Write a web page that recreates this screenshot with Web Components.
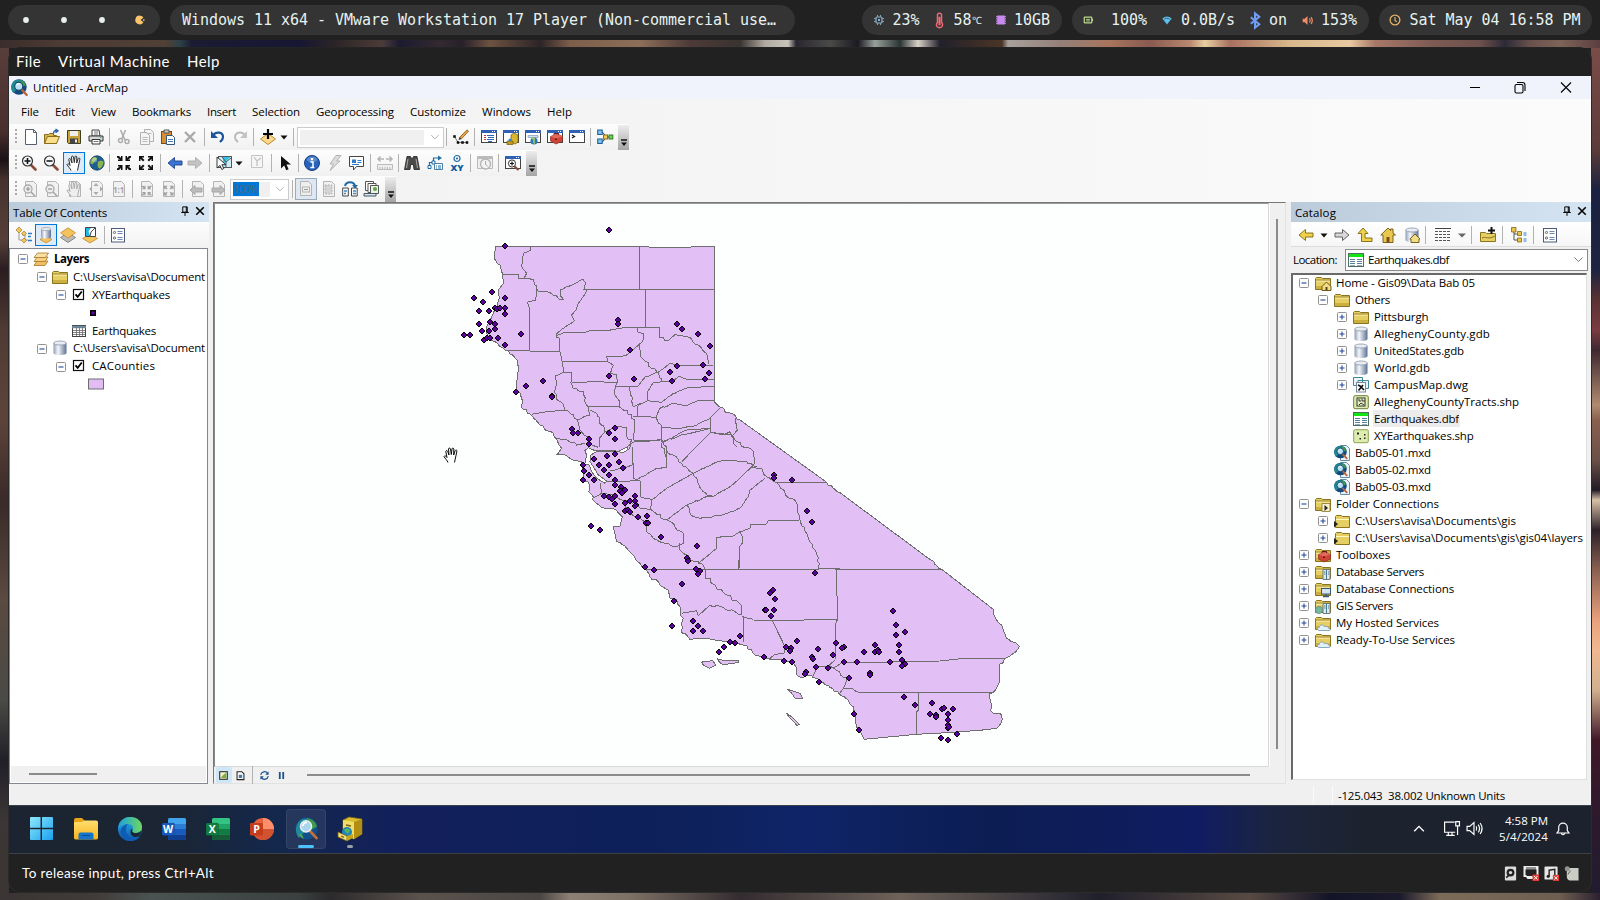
<!DOCTYPE html>
<html lang="en"><head><meta charset="utf-8"><title>Untitled - ArcMap</title>
<style>
html,body{margin:0;padding:0;width:1600px;height:900px;overflow:hidden;background:#212121;font-family:"Open Sans","Noto Sans",sans-serif;font-size:12px;color:#000}
</style></head><body>
<desk-top></desk-top>
<script>
/* ---------- icon library: 16x16 artwork unless a viewBox is given ---------- */
const page=(c='#555')=>`<path d="M2.5.5h8l3 3v12h-11z" fill="#fff" stroke="${c}"/><path d="M10.5.5v3h3" fill="none" stroke="${c}"/>`;
const win=(inner)=>`<rect x=".5" y="1.5" width="15" height="12" fill="#fff" stroke="#444"/><rect x="0" y="1" width="16" height="3" fill="#2f62b5"/><path d="M11 2.5h1M13 2.5h1" stroke="#fff"/>${inner}`;
const folder=(extra='')=>`<path d="M.5 14.5v-11l1-1h5l1 1h8v11z" fill="#e6cf62" stroke="#8a7420"/><path d="M1 6h14" stroke="#fff6c0"/><path d="M1 5h14" stroke="#8a7420" stroke-width=".8"/><path d="M1 11h14v3H1z" fill="#cbb040"/>${extra}`;
const cyl=`<path d="M1.500 3v10c0 1.300 3 2 6.500 2s6.500-.7 6.500-2V3z" fill="url(#cy)"/><ellipse cx="8" cy="3" rx="6.300" ry="2" fill="#e9edf3" stroke="#8b97a8" stroke-width=".8"/>`;
const globe=`<circle cx="8" cy="8" r="7.2" fill="#1d5f93" stroke="#123a5e" stroke-width=".8"/><path d="M4 2.5c2-1 4-.5 4 1S5 6 4.500 8 3 9 1.500 8.500C1 6 2 4 4 2.500zM9 7c2-2 5-1 5.500 0S13 13 11 13.500 8 10 9 7z" fill="#8ab34d"/><circle cx="5.500" cy="5" r="2.500" fill="#fff" opacity=".35"/>`;
const arrows=(c)=>`<g fill="${c}"><path d="M1 1h2l2 2V1h1.500v5H2V4.500h2L1 2.500z"/><path transform="matrix(-1 0 0 1 16 0)" d="M1 1h2l2 2V1h1.500v5H2V4.500h2L1 2.500z"/><path transform="matrix(1 0 0 -1 0 16)" d="M1 1h2l2 2V1h1.500v5H2V4.500h2L1 2.500z"/><path transform="rotate(180 8 8)" d="M1 1h2l2 2V1h1.500v5H2V4.500h2L1 2.500z"/></g>`;
const arrowsOut=(c)=>['','translate(16 0) scale(-1 1)','translate(0 16) scale(1 -1)','rotate(180 8 8)'].map(t=>`<path transform="${t}" fill="${c}" d="M1 1h5v1.500H3.800L6.500 5 5 6.500 2.500 3.800V6H1z"/>`).join('');
const mag=(s,c='#333')=>`<path d="M10 10l4.500 4.500" stroke="#8c4a38" stroke-width="2.600" stroke-linecap="round"/><circle cx="6.500" cy="6" r="5" fill="#f4f8fb" stroke="${c}" stroke-width="1.200"/><path d="${s}" stroke="#111" stroke-width="1.600"/>`;
const arcmap=`<circle cx="7.500" cy="7.500" r="7.300" fill="#134a80"/><path d="M2 3c2-3 7-3 10 0L8 8l-6 5C-.5 10 0 6 2 3z" fill="#1f8a90"/><path d="M9 1q4 1 5 5l-3 1z" fill="#3f9a4a"/><path d="M10.500 10.500l4.300 4.500" stroke="#b5643b" stroke-width="2.200" stroke-linecap="round"/><circle cx="7.300" cy="6.800" r="3.800" fill="#b8e0f4" stroke="#173f66"/><path d="M5.300 6a2.500 2.500 0 0 1 3-1.500" stroke="#fff" fill="none"/>`;
const pgGrey='<path d="M3.500.5h8l3 3v12h-11z" fill="#f1f1f1" stroke="#b4b4b4"/>';
const hand=(c,f='#fff')=>`<path d="M5 15.500c-.5-2-3-4-4-6 .6-1.200 2-.6 3 1L2.800 4.500c0-1.300 1.500-1.300 1.900 0L6 8 5.500 2c.2-1.300 1.700-1.200 2 0L8.300 7.500 9 1.800c.3-1.100 1.700-1 1.800.2L10.700 8l1.500-4.500c.5-1 1.800-.6 1.700.6-.2 3-1.400 5-1.700 8l-.7 3.400" fill="${f}" stroke="${c}" stroke-width=".95"/>`;
const srv='<path d="M8 5.500h7v10H8z" fill="#dfe8ee" stroke="#60737f" stroke-width=".9"/><path d="M11.500 5.500v10M9 8h1.500M13 8h1M9 10h1.500M13 10h1" stroke="#4a7a8f"/>';
const cloud='<path d="M4 15.500c-2 0-2-3 .2-3 .3-3 4-3.500 5-1 3-.8 4.500 1 4.500 1.800 2 .2 1.800 2.200.300 2.200z" fill="#e2f0fa" stroke="#7aa0ba" stroke-width=".9"/>';
const red='<path d="M3.500 7.500l7-2.500 5 2.500v4.500l-6.500 3-5.500-3z" fill="#cf4436" stroke="#8f2a20" stroke-width=".7"/><path d="M3.500 7.500l5.500 2 6.500-2-5-2.500z" fill="#e2695a"/><path d="M7 6V4.500h4.500V6" stroke="#6b1711" fill="none"/><path d="M8 9.500h2v1.500H8z" fill="#6b1711"/>';
const office=(c1,c2,c3,c4,L)=>`<rect x="6" y="1" width="18" height="22" rx="1.500" fill="${c1}"/><path d="M6 7h18v5H6z" fill="${c2}"/><path d="M6 12h18v5.500H6z" fill="${c3}"/><path d="M6 17.500h18V22a1 1 0 0 1-1 1H7a1 1 0 0 1-1-1z" fill="${c4}"/><rect y="6" width="12.500" height="12.500" rx="1.200" fill="${c3}" stroke="#0003" stroke-width=".6"/><text x="6.200" y="16" font-family="Open Sans,sans-serif" font-weight="700" font-size="10.500" fill="#fff" text-anchor="middle">${L}</text>`;
const I={
new:page('#54606e'),
open:'<path d="M.5 14.500v-9h4l1-1h4v2h3v8z" fill="#d9b64a" stroke="#8a6c1c"/><path d="M.5 14.500l3-7h12l-3 7z" fill="#f8e08a" stroke="#8a6c1c"/><path d="M9.500 4.500c0-2 1-3 3-3M11.500 0l2.500 1.800-2.500 2" stroke="#1f5ca8" stroke-width="1.300" fill="none"/>',
save:'<path d="M1.500 1.500h13v13h-12l-1-1z" fill="#c9a23a" stroke="#3d3d20"/><rect x="4" y="2" width="8" height="5" fill="#eee"/><path d="M4 9.500h8v5H4z" fill="#444"/><path d="M9 10.500h2v3H9z" fill="#eee"/>',
print:'<path d="M4 1h7l1 6H4z" fill="#fff" stroke="#444"/><path d="M1 7h14v5H1z" fill="#d7d7d7" stroke="#333"/><path d="M4 10.500h8v4.500H4z" fill="#fff" stroke="#333"/><path d="M12 8.500h1.500" stroke="#3b7"/><path d="M5.500 12.500h5M6 3h4M6 5h4" stroke="#777"/>',
cut:'<path d="M4.500 1L9 11M9.500 1L6 9.500" stroke="#aaa" stroke-width="1.500" fill="none"/><circle cx="4.500" cy="11.500" r="2" fill="none" stroke="#aaa" stroke-width="1.400"/><circle cx="11" cy="12.500" r="2" fill="none" stroke="#aaa" stroke-width="1.400"/>',
copy:'<path d="M5.500.500h6l3 3v9h-9z" fill="#f4f4f4" stroke="#b0b0b0"/><path d="M1.500 3.500h6l3 3v9h-9z" fill="#f4f4f4" stroke="#b0b0b0"/><path d="M3.500 8.500h5M3.500 10.500h5M3.500 12.500h5M7.500 4.500h5" stroke="#bbb"/>',
paste:'<rect x="1.500" y="2.500" width="10" height="12" fill="#d98e32" stroke="#7d4c12"/><path d="M4 1h5v3H4z" fill="#ccc" stroke="#555"/><path d="M6.500 6.500h6l2 2v7h-8z" fill="#fff" stroke="#345a80"/><path d="M8 10.500h5M8 12.500h5" stroke="#4a7ab5"/>',
del:'<path d="M3 3l10 10M13 3L3 13" stroke="#a9a9a9" stroke-width="2.400"/>',
undo:'<path d="M3 6.500C6 2 13 3 13 8c0 3-2 4-3 5" stroke="#1d549f" stroke-width="2.200" fill="none"/><path d="M1 2v7h7z" fill="#1d549f"/>',
redo:'<path d="M13 6.500C10 2 3 3 3 8c0 3 2 4 3 5" stroke="#bbb" stroke-width="2" fill="none"/><path d="M15 2v7H8z" fill="#c4c4c4"/>',
add:'<path d="M8 4.500l7.500 5.500L8 15.500.500 10z" fill="#fbd88c" stroke="#c08a30"/><path d="M8 0v10M3 5h10" stroke="#000" stroke-width="2.200"/>',
dd:'<path d="M4.500 6.500h7L8 10.500z" fill="#111"/>',ddg:'<path d="M4 6.500h8L8 10.500z" fill="#666"/>',
editor:'<path d="M6.500 8.500L14 .8l1.600 1.400L8.500 9.800z" fill="#e8a33c" stroke="#7a4b12" stroke-width=".7"/><path d="M5.500 11l1-2.500L8.500 10z" fill="#222"/><path d="M1.500 7.500L5 13.500h9" stroke="#555" fill="none" stroke-width=".8"/><path d="M.5 6.500h2v2h-2zM4 12.500h2v2H4zM8.500 12.500h2v2h-2zM13 12.500h2v2h-2z" fill="#111" stroke="#111" stroke-width=".6"/>',
toc:win('<path d="M3 6.500h2M3 8.500h2M3 10.500h2" stroke="#c33"/><path d="M6 6.500h7M7 8.500h6M6 10.500h7M7 12.500h4" stroke="#2f62b5"/>'),
catw:win('<path d="M8 6l3-2 4 2v7l-3 2-4-2z" fill="#d8b72f" stroke="#7d6510" stroke-width=".8"/><path d="M4 12h6v3.500H4z" fill="#c39a1c" stroke="#7d6510" stroke-width=".8"/><circle cx="7" cy="11" r="1.600" fill="#3a86c9"/>'),
searchw:win('<path d="M3 6.500h10v2H3z" fill="#cfe4f5" stroke="#7a9ab5" stroke-width=".7"/><circle cx="9" cy="12" r="3.600" fill="#2b78b5"/><path d="M7 10c2-1.500 3 0 2 1.500s1 2 0 3" stroke="#a6d06a" stroke-width="1.500" fill="none"/>'),
toolw:win(red),
python:win('<path d="M3 6l2.500 1.500L3 9" stroke="#111" fill="none" stroke-width="1.200"/>'),
model:'<path d="M3 3.500h3l3 4.500M3 12.500h3l3-4.500h3" stroke="#333" fill="none"/><rect x=".7" y="1" width="4.500" height="4.500" fill="#7fc0ec" stroke="#1a5d96"/><rect x=".7" y="10" width="4.500" height="4.500" fill="#7fc0ec" stroke="#1a5d96"/><rect x="6.500" y="6" width="4" height="4" fill="#f3cf5a" stroke="#8a6c1c"/><rect x="12" y="6" width="3.800" height="4" fill="#7ccf5c" stroke="#2c7a1c"/>',
zin:mag('M6.500 3v6M3.500 6h6'),zout:mag('M3.500 6h6'),pan:hand('#222'),globe,
fin:arrows('#111'),fout:arrowsOut('#111'),
back:'<path d="M1 8l6.500-5.500V6H15v4H7.500v3.500z" fill="#3b74d1" stroke="#1c428c" stroke-width=".9"/>',
fwd:'<path d="M15 8L8.500 2.500V6H1v4h7.500v3.500z" fill="#c4c4c4" stroke="#aaa" stroke-width=".9"/>',
sel:'<rect x="2.500" y="1.500" width="13" height="11" fill="#cfeefb" stroke="#555"/><path d="M8 12l1-5 5-4.500V2H7v4z" fill="#2cc3e8"/><path d="M6 2l4 5 5-4M10 7v5" stroke="#555" fill="none"/><path d="M1 2v11l3-2.500 1.800 4 2-1-1.900-3.800H10z" fill="#fff" stroke="#222" stroke-width=".9"/>',
clr:'<path d="M2.500.5h11v12h-11z" fill="#f6f6f6" stroke="#c4c4c4"/><path d="M5 2l3 4 4-3M8 6v5" stroke="#c0c0c0" fill="none" stroke-width="1.200"/>',
ptr:'<path d="M4 1v12.500l3.200-3 2 4.800 2.400-1.100-2.100-4.600H14z" fill="#111"/>',
info:'<circle cx="8" cy="8" r="7.500" fill="#2763bd" stroke="#163f86"/><ellipse cx="8" cy="4.500" rx="5" ry="3" fill="#fff" opacity=".25"/><path d="M8 3v2.200" stroke="#fff" stroke-width="2.200"/><path d="M6.500 7H9v5.500M6.300 12.500h4" stroke="#fff" stroke-width="1.500" fill="none"/>',
bolt:'<path d="M9 .5h5L9.500 6H13L3 15.500 6.500 9H3z" fill="#ddd" stroke="#b3b3b3"/>',
popup:'<path d="M1.500 1.500h14v10h-7l-3 3.500v-3.500h-4z" fill="#fff" stroke="#444"/><rect x="4" y="4.500" width="4" height="3.500" fill="#2f7fc8"/><path d="M9.500 5.500h4M9.500 7.500h4M4 9.500h7" stroke="#2f7fc8"/>',
meas:'<path d="M1 4h6M9 4h6M3.500 1.500L1 4l2.500 2.500M12.500 1.500L15 4l-2.500 2.500" stroke="#b5b5b5" stroke-width="1.500" fill="none"/><path d="M.5 9.500h15v5H.5z" fill="#eee" stroke="#bbb"/><path d="M3 12v2M5.500 12v2M8 12v2M10.500 12v2M13 12v2" stroke="#bbb"/>',
binoc:'<path d="M3 1.500h3.500l1 2h1l1-2H13l2.500 13h-5.500l-.7-5H6.700l-.7 5H.5z" fill="#4a4a48" stroke="#222" stroke-width=".8"/><path d="M4 4L2.500 13M12 4l1.500 9" stroke="#aaa"/>',
route:'<path d="M2.500 12V7.500h4V3H12" stroke="#1d6aa5" fill="none" stroke-width="1.200"/><path d="M11 .5L15 3l-4 2.500z" fill="#1d6aa5"/><path d="M1 10.500h3v3H1zM5 6h3v3H5z" fill="#fff" stroke="#1d6aa5"/><path d="M7.500 8.500h8v6h-8z" fill="#fff" stroke="#4a7ea5"/><path d="M9 11h1M11 11h3M9 13h1M11 13h3" stroke="#1d6aa5"/>',
xy:'<circle cx="8" cy="3.500" r="3" fill="none" stroke="#1d6aa5" stroke-width="1.200"/><circle cx="8" cy="3.500" r="1.100" fill="#1d6aa5"/><text x="8" y="15.500" font-family="Open Sans,sans-serif" font-weight="800" font-size="9.500" text-anchor="middle" fill="#0d5c9c">XY</text>',
time:'<path d="M.5 1.500h15v12H.5z" fill="#eee" stroke="#bbb"/><path d="M1 3h14" stroke="#bbb" stroke-width="2"/><circle cx="8.500" cy="9" r="5" fill="#f2f2f2" stroke="#b5b5b5" stroke-width="1.300"/><path d="M8.500 6v3.500l2 1.500" stroke="#aaa" fill="none"/>',
viewer:win('<path d="M9 11l4.500 4" stroke="#8c4a38" stroke-width="2.200"/><circle cx="7" cy="8.500" r="3.600" fill="#fff" stroke="#333"/><path d="M7 6.500v4M5 8.500h4" stroke="#111" stroke-width="1.200"/>'),
g1:pgGrey+'<circle cx="6" cy="8" r="4" fill="#eee" stroke="#aaa" stroke-width="1.300"/><path d="M6 6v4M4 8h4M9 11l4 4" stroke="#a5a5a5" stroke-width="1.600"/>',
g2:pgGrey+'<circle cx="6" cy="8" r="4" fill="#eee" stroke="#aaa" stroke-width="1.300"/><path d="M4 8h4M9 11l4 4" stroke="#a5a5a5" stroke-width="1.600"/>',
g3:pgGrey+hand('#aaa','#eee'),
g4:pgGrey+'<path d="M8 2l2.500 3h-5zM8 14l2.500-3h-5zM1 8l3-2.500v5zM15 8l-3-2.500v5z" fill="#aaa"/>',
g5:pgGrey+'<text x="8.700" y="12" font-family="Open Sans,sans-serif" font-size="8" font-weight="700" text-anchor="middle" fill="#a5a5a5">1:1</text>',
g6:pgGrey+`<g transform="translate(3 4) scale(.7)">${arrows('#9d9d9d')}</g>`,g7:pgGrey+`<g transform="translate(3 4) scale(.7)">${arrowsOut('#9d9d9d')}</g>`,
g8:pgGrey+'<path d="M1 9l5-4.500V7h7v4H6v2.500z" fill="#bbb" stroke="#a8a8a8"/>',g9:pgGrey+'<path d="M15 9l-5-4.500V7H2v4h8v2.500z" fill="#bbb" stroke="#a8a8a8"/>',
g10:'<path d="M2.500.5h8l3 3v11h-11z" fill="#eee" stroke="#b4b4b4"/><rect x="4.500" y="6" width="7" height="5" fill="#eee" stroke="#b4b4b4"/><path d="M6 8.500h4" stroke="#999"/>',
g11:pgGrey+'<path d="M5 4h7v9H5z" fill="#d4d4d4" stroke="#aaa" stroke-dasharray="1.500 1.500"/>',
swap:'<path d="M3 5c1-5 9-5 10 0" stroke="#1d6aa5" stroke-width="2" fill="none"/><path d="M10 4h6l-3 3.500z" fill="#1d6aa5"/><path d="M.7 7h5.600v8H.7zM9.500 7h5.700v8H9.500z" fill="#fff" stroke="#444"/><path d="M2 10h3M11 10h3M2 12.500h2M11 12.500h3" stroke="#3b86c4" stroke-width="1.500"/>',
dd2:'<path d="M1.500.5h8v9h-8z" fill="#fff" stroke="#555"/><path d="M4 2.500h8v9H4z" fill="#fff" stroke="#555"/><path d="M6.500 4.500h8v8h-8z" fill="#eaf4e0" stroke="#555"/><circle cx="11" cy="8" r="2" fill="#5fa052"/><path d="M0 12.500h12V15H0z" fill="#d9e6f2" stroke="#456"/>',
lsrc:'<path d="M3 4v9h3M6 8h3v5h3" stroke="#999" fill="none"/><path d="M3 0l3 3-3 3-3-3zM8 4l2.500 2.500L8 9 5.500 6.500zM8 11l2.500 2.500L8 16l-2.500-2.500z" fill="#efc55c" stroke="#a37b25" stroke-width=".7"/><path d="M12 6.500h4M12 13.500h4M12 9.500h3" stroke="#2f7fc8" stroke-width="1.300"/>',
lcyl:'<path d="M8 9l6 3.500L8 16l-6-3.500z" fill="#f5c35c" stroke="#b9822a" stroke-width=".7"/><path d="M3 2v8c0 1 2 1.500 5 1.500s5-.5 5-1.500V2z" fill="url(#cy)"/><ellipse cx="8" cy="2" rx="4.800" ry="1.500" fill="#eee" stroke="#8b97a8" stroke-width=".7"/>',
lvis:'<path d="M8 5.500l7.500 5L8 15.500.500 10.500z" fill="#bbb" stroke="#666" stroke-width=".7"/><path d="M8 .8l7.500 5L8 11 .5 5.800z" fill="#f5c35c" stroke="#b9822a" stroke-width=".7"/>',
lsel:'<path d="M8 7l7.500 4.500L8 16 .5 11.500z" fill="#f5c35c" stroke="#b9822a" stroke-width=".7"/><path d="M3.500.5h10v9h-10z" fill="#fff" stroke="#444"/><path d="M4 1h5L6.500 4 8 9H4z" fill="#22b6e0"/><path d="M13 1L9 5l-1 4" stroke="#444" fill="none"/>',
opts:'<rect x="1.500" y="1.500" width="13" height="13.500" fill="#fff" stroke="#4c5a78"/><circle cx="4.500" cy="5.500" r="1.100" fill="none" stroke="#444" stroke-width=".8"/><circle cx="4.500" cy="11" r="1.100" fill="none" stroke="#444" stroke-width=".8"/><path d="M7.500 4.500h5M7.500 6.500h5M7.500 10.500h5M7.500 12.500h5" stroke="#6a86b5"/>',
layers:'<path d="M4 10h11l-3 4.500H1z" fill="#f0bd62" stroke="#a8762a" stroke-width=".8"/><path d="M4 6h11l-3 4.500H1z" fill="#f6cf80" stroke="#a8762a" stroke-width=".8"/><path d="M4.500 2h11l-3 4.500H1z" fill="#fbe0a4" stroke="#a8762a" stroke-width=".8"/>',
folder:folder(),cyl,
chk:'<rect x="2.500" y="2.500" width="10" height="10" fill="#fff" stroke="#111" stroke-width="1.200"/><path d="M4.500 7.300l2.200 2.500L10.800 4.500" stroke="#000" stroke-width="1.800" fill="none"/>',
table:'<rect x="1.500" y="2.500" width="13" height="11" fill="#fff" stroke="#444"/><path d="M1 4h14" stroke="#6b8ba0" stroke-width="2.400"/><path d="M2 7.500h12M2 9.500h12M2 11.500h12M5.500 4v9M8.500 4v9M11.500 4v9" stroke="#666" stroke-width=".8"/>',
dot:'<rect x="5" y="5" width="6" height="6" fill="#000"/><rect x="6.500" y="6.500" width="3" height="3" fill="#6a00a8"/>',
sw:'<rect x=".5" y="3" width="15" height="10" fill="#e2bdf4" stroke="#6e6e6e"/>',
dbf:'<rect x=".5" y="1.500" width="15" height="13" fill="#fff" stroke="#4a7060"/><path d="M1 3.500h14" stroke="#14e414" stroke-width="3"/><path d="M2 7.500h5M2 9.500h5M2 11.500h5M9 7.500h5M9 9.500h5M9 11.500h5" stroke="#5a7f9a"/><path d="M2 13.500h5M9 13.500h5" stroke="#9ab"/>',
shp:'<rect x=".7" y="1.700" width="14.600" height="13" rx="1.500" fill="#dfecb0" stroke="#6c7f3a"/><rect x="4" y="4" width="8" height="8" fill="#e8f2c0" stroke="#333"/><path d="M5 6h2v2M9 5v2h3M6 11l2-2 3 2" stroke="#333" fill="none"/>',
shpp:'<rect x=".7" y="1.700" width="14.600" height="13" rx="1.500" fill="#dfecb0" stroke="#8ca04e"/><path d="M4 4.500h2v2H4zM11 6h1.500v1.500H11zM6.500 10h1.500v1.500H6.500zM11 9.500h1.500v1.500H11z" fill="#222"/>',
dwg:'<path d="M.5.500h9v8h-9zM5 3.500h10.500v8H5z" fill="#eaf6fa" stroke="#3c8898"/><rect x="3.500" y="5.500" width="9" height="9.500" fill="#fff" stroke="#789"/><path d="M5 8l2 1 4 4M10 8l-2 2.500-2.500 3" stroke="#111" stroke-width="1.700" fill="none"/>',
mxd:'<path d="M6.500.5h6l3 3v12h-9z" fill="#eaf4fb" stroke="#5f8cab"/><g transform="translate(0 .5) scale(.86)">'+arcmap+'</g>',
fhome:folder('<path d="M7 15.500v-4L11.500 7l4.500 4.500v4z" fill="#f1dc86" stroke="#5c4a12" stroke-width=".9"/><path d="M10.500 12h2v3.500h-2z" fill="#5c4a12"/>'),
fconn:folder('<path d="M7 7.500h8v8H7z" fill="#f7f0cf" stroke="#8a7420" stroke-width=".8"/><path d="M9.500 9v6l3.500-3z" fill="#222"/>'),
flink:'<path d="M1.500 14.500v-11l1-1h5l1 1h7v11z" fill="#e6cf62" stroke="#8a7420"/><path d="M2 6.500h13" stroke="#fff6c0"/><path d="M0 8l4 3-4 3.500z" fill="#222"/>',
ftool:folder(red),fsrv:folder(srv),
fdbc:folder('<rect x="6.500" y="7.500" width="9" height="5.500" fill="#d4e5f2" stroke="#3c5a78"/><path d="M11 13v2M8 15.500h6" stroke="#3c5a78" stroke-width="1.300"/>'),
fgis:folder(srv+'<circle cx="4" cy="12" r="3.600" fill="#79b8a0" stroke="#4d8575" stroke-width=".7"/>'),fcloud:folder(cloud),
cback:'<path d="M1 8l6.500-5.500V6H15v4H7.500v3.500z" fill="#f0d24a" stroke="#80680f" stroke-width=".9"/>',
cfwd:'<path d="M15 8L8.500 2.500V6H1v4h7.500v3.500z" fill="#d8d8d8" stroke="#555" stroke-width=".9"/>',
cup:'<path d="M6 1l5 5.500H8V11h7v3.500H4.500v-8H1z" fill="#f0d24a" stroke="#80680f" stroke-width=".9"/>',
chome:'<path d="M3 15.500V8H.8L8 1l2.500 2.500V2h2.500v4l2.500 2H13v7.500z" fill="#e8c84e" stroke="#6d5310" stroke-width=".9"/><path d="M6.500 10h3v5.500h-3z" fill="#7d4d1a"/>',
cgdb:cyl+'<path d="M7 15.500V12H5.800L11 7l5 5h-1v3.500z" fill="#f1dc86" stroke="#6d5310" stroke-width=".9"/>',
cview:'<path d="M0 1.500h16" stroke="#444"/><path d="M0 4.500h16M0 7.500h16M0 10.500h16M0 13.500h16" stroke="#555" stroke-dasharray="3 1"/>',
cconn:'<path d="M.5 14.500v-9h5l1 1h9v8z" fill="#e6cf62" stroke="#8a7420"/><path d="M2 11c3-2 7 2 13-2" stroke="#8a7420" fill="none"/><path d="M11.500 0v7M8 3.500h7" stroke="#111" stroke-width="2"/>',
ctree:'<path d="M3 3v10h4M3 7h4" stroke="#555" fill="none"/><path d="M.5.500h4.500v4.500H.5zM6.500 4.500h4v4h-4zM6.500 11h4v4h-4z" fill="#ebc24c" stroke="#80680f" stroke-width=".8"/><path d="M12.500 6h3M12.500 8h3M12.500 12h3M12.500 14h3" stroke="#2f7fc8" stroke-width="1.200"/>',
arcmap,
plus:'<rect x="3.500" y="3.500" width="9" height="9" rx="1" fill="#fdfdfd" stroke="#919191"/><path d="M5.500 8h5M8 5.500v5" stroke="#26499b" stroke-width="1.100"/>',
minus:'<rect x="3.500" y="3.500" width="9" height="9" rx="1" fill="#fdfdfd" stroke="#919191"/><path d="M5.500 8h5" stroke="#26499b" stroke-width="1.100"/>',
pin:'<path d="M5 2.500h6v7H5zM3 10h10M8 10v4.500M9.700 2.500v7" fill="none" stroke="#000" stroke-width="1.300"/>',
x:'<path d="M3 3l10 10M13 3L3 13" stroke="#000" stroke-width="2.100"/>',
chev:'<path d="M3 5.500l5 5 5-5" stroke="#777" stroke-width="1.200" fill="none"/>',
wmin:'<path d="M3 7.500h10" stroke="#000" stroke-width="1.200"/>',
wmax:'<rect x="3" y="4.500" width="8" height="8.500" rx="1.500" fill="none" stroke="#000" stroke-width="1.100"/><path d="M5 2.500h5.500q2.500 0 2.500 2.500v6" fill="none" stroke="#000" stroke-width="1.100"/>',
wx:'<path d="M3 2.500l10 10M13 2.500l-10 10" stroke="#000" stroke-width="1.100"/>',
cpu:'<rect x="4" y="4" width="8" height="8" rx="1.500" fill="none" stroke="#8fb8d0" stroke-width="1.600"/><rect x="6.700" y="6.700" width="2.600" height="2.600" fill="#8fb8d0"/><path d="M6 1.500v2M10 1.500v2M6 12.500v2M10 12.500v2M1.500 6h2M1.500 10h2M12.500 6h2M12.500 10h2" stroke="#8fb8d0" stroke-width="1.300"/>',
therm:'<path d="M5.800 10V2.500a2.200 2.200 0 0 1 4.400 0V10a3.300 3.300 0 1 1-4.400 0z" fill="none" stroke="#ee6a76" stroke-width="1.500"/><path d="M8 4v9" stroke="#ee6a76" stroke-width="2.400"/>',
mem:'<path d="M3 2h10v12H3z" fill="#c78bf0"/><path d="M1.500 3.500h2M1.500 6.500h2M1.500 9.500h2M1.500 12.500h2M12.500 3.500h2M12.500 6.500h2M12.500 9.500h2M12.500 12.500h2" stroke="#c78bf0" stroke-width="1.500"/>',
bat:'<rect x="2" y="3.500" width="12" height="9" rx="1" fill="none" stroke="#b8d88a" stroke-width="2"/><path d="M5 7h6M5 9.500h6" stroke="#b8d88a" stroke-width="1.500"/><path d="M15.300 6v4" stroke="#b8d88a" stroke-width="1.500"/>',
wifi:'<path d="M.5 5.500q7.500-6 15 0L8 15z" fill="#5bc0ee"/><path d="M3.500 6.500q4.500-3 9 0" stroke="#333" stroke-width="1" fill="none"/>',
bt:'<path d="M3 4.500l9 7.500-4.500 3.500V.5L12 4 3 11.500" fill="none" stroke="#6f9cf5" stroke-width="2.200"/>',
vol:'<path d="M1 5.500h3l4-4v13l-4-4H1z" fill="#f28a68"/><path d="M11 5q2 3 0 6M13.300 3q3.200 5 0 10" fill="none" stroke="#f28a68" stroke-width="1.800"/>',
clock:'<circle cx="8" cy="8" r="6.500" fill="none" stroke="#e5b567" stroke-width="1.700"/><path d="M8 4v4.500l2.500 2" fill="none" stroke="#e5b567" stroke-width="1.500"/>',
pac:'<path d="M8.500 1a7 7 0 1 0 5 10.500L9 8l4.500-4A7 7 0 0 0 8.500 1z" fill="#fbc36a"/><circle cx="14" cy="8" r="1.400" fill="#fbc36a"/>',
pt:'<circle cx="8" cy="8" r="2.900" fill="#e8f0ee"/>',
ldata:'<rect x="2.500" y="2.500" width="11" height="11" fill="#f4f4c8" stroke="#222" stroke-width="1.500"/><path d="M4 11l4-4 4-3v8H8z" fill="#7da94a"/>',
llay:'<path d="M3 2.500h7l3 3v8.500H3z" fill="#fff" stroke="#222" stroke-width="1.500"/><path d="M5.500 7h5v4.500h-5z" fill="#4a7aa5"/>',
refresh:'<path d="M2.500 7a5.500 5.500 0 0 1 10-2M13.500 9a5.500 5.500 0 0 1-10 2" fill="none" stroke="#1d4f8c" stroke-width="1.700"/><path d="M14 2v5H9zM2 14V9h5z" fill="#1d4f8c"/>',
pause:'<path d="M5.500 3v10M10.500 3v10" stroke="#1d4f8c" stroke-width="2.600"/>',
up:'<path d="M2.500 10.500L8 5l5.500 5.500" fill="none" stroke="#fff" stroke-width="1.600"/>',
net:'<path d="M11 2H1.500v9.500h10M5 12v2M8.500 12v2M3 14.500h8" fill="none" stroke="#fff" stroke-width="1.100"/><path d="M12 1.500h3.500v4H12zM13.700 5.500v8.500" fill="none" stroke="#fff" stroke-width="1.100"/>',
snd:'<path d="M1 6h2.500L7.500 2.500v11L3.500 10H1zM9.500 6q1.300 2 0 4M11.500 4.300q2.500 3.700 0 7.400M13.300 2.800q3.600 5.200 0 10.400" fill="none" stroke="#fff" stroke-width="1.100"/>',
bell:'<path d="M2 12h12l-1.700-2.500V6.500a4.300 4.300 0 0 0-8.600 0v3zM6.300 12.500q1.700 2.500 3.400 0" fill="none" stroke="#fff" stroke-width="1.200"/>',
hdd:'<rect x="2" y=".5" width="12" height="15" rx="1" fill="#dcdcdc"/><circle cx="8" cy="7" r="4.200" fill="#222"/><circle cx="8" cy="7" r="1.800" fill="#dcdcdc"/><path d="M3.500 12.500L6 10" stroke="#222" stroke-width="1.800"/>',
nic:'<path d="M.5 1h15v11l-2 2h-9l-1.500-2H.5z" fill="#eee"/><path d="M2.500 4.500h11V11H4L2.500 9.500z" fill="#222"/><path d="M4 2v3.500M6 2v3.500M8 2v3.500M10 2v3.500M12 2v3.500" stroke="#222" stroke-width=".9"/><rect x="9.500" y="9.500" width="6.500" height="6.500" fill="#e23b34"/><path d="M11 11l3.500 3.500M14.500 11L11 14.500" stroke="#fff"/>',
mus:'<rect x=".5" y=".5" width="14" height="14" rx="1" fill="#e6e6e6"/><path d="M5.500 11V4.500l6-1V10" fill="none" stroke="#222" stroke-width="1.500"/><circle cx="4.500" cy="11" r="1.700" fill="#222"/><rect x="9.500" y="9.500" width="6.500" height="6.500" fill="#e23b34"/><path d="M11 11l3.500 3.500M14.500 11L11 14.500" stroke="#fff"/>',
note:'<path d="M3 2h12.500v13.500H6q-3-1-3-4z" fill="#c9cdc4"/><circle cx="3.500" cy="3" r="2.700" fill="#8f9590"/><path d="M4 9l3-4" stroke="#555"/>',
start:'<g fill="url(#wn)"><path d="M0 1q0-1 1-1h10v11.300H0zM12.500 0H23q1 0 1 1v10.300H12.500zM0 12.700h11V24H1q-1 0-1-1zM12.500 12.700H24V23q0 1-1 1H12.500z"/></g>',
files:'<path d="M0 3q0-2 2-2h6l3 3h11q2 0 2 2v4H0z" fill="#e8a317"/><path d="M0 6q0-1 1-1h7l2.500-1.500H22q2 0 2 2V21q0 1.500-2 1.500H2Q0 22.500 0 21z" fill="url(#fo)"/><path d="M4.500 22.500v-5q0-2 2-2h11q2 0 2 2v5z" fill="#1675c9"/><path d="M8 18.500h8" stroke="#0c4f96"/>',
edge:'<circle cx="12" cy="12" r="12" fill="url(#ed)"/><path d="M12 0c8 0 12 5 12 10 0 4-3 6-6 6-3.500 0-4.500-1.500-3.500-3C16 10 14 7 10 7c-4.500 0-8 2.500-9.800 4C1 4 6 0 12 0z" fill="url(#ed2)"/><path d="M10 7c-3 3-3 10 2.500 13.500 3.500 2 7 1 9.500-1C18 25 9 26 4 20 0 14 4 8 10 7z" fill="#0f5cb5"/><path d="M14.500 13c-1 1.500 0 3 3.500 3 2 0 4-.8 5.300-2.500-.2 2-.8 4-1.800 5.500-4 2-9 1-9-4 0-3 1.500-4 2-2z" fill="#1c2634"/>',
word:office('#41a5ee','#2b7cd3','#185abd','#103f91','W'),excel:office('#33c481','#21a366','#107c41','#185c37','X'),
ppt:'<circle cx="13" cy="12" r="11" fill="#e8613f"/><path d="M13 1a11 11 0 0 1 11 11H13z" fill="#ff8f6b"/><path d="M2 12h22a11 11 0 0 1-22 0z" fill="#d35230"/><rect y="6" width="13" height="12.500" rx="1.200" fill="#c43e1c"/><text x="6.500" y="16" font-family="Open Sans,sans-serif" font-weight="700" font-size="10.500" fill="#fff" text-anchor="middle">P</text>',
arcbig:'<circle cx="12" cy="12" r="11.500" fill="#12508c"/><path d="M2 8Q6 0 14 2l4 6-8 8-6 6Q-1 15 2 8z" fill="#1f8a9c"/><path d="M12 1q9 1 11 9l-5 3-2-7z" fill="#3f9a4a"/><path d="M4 18q4-1 5 5-3-1-5-5z" fill="#5aa84a"/><path d="M16 15l6.500 7" stroke="#c8713a" stroke-width="2.800" stroke-linecap="round"/><circle cx="11.500" cy="9.800" r="5.800" fill="#a9d6ee" stroke="#e8eef2" stroke-width="1.500"/><path d="M8 9.500q1-4 4.500-4" stroke="#fff" stroke-width="1.800" fill="none"/>',
catbig:'<path d="M5 3l6-3 13 2v15l-8 5-11-5z" fill="#d9bd2e" stroke="#7a6410" stroke-width=".8"/><path d="M5 3l11 2v17l-11-5z" fill="#f1dd6a"/><path d="M16 5l8-3v15l-8 5z" fill="#b08f12"/><path d="M8 8l5 1" stroke="#7a6410" stroke-width="1.500"/><circle cx="9" cy="15" r="5" fill="#1c86c0"/><path d="M6 13q3-3 6 0l-2 4z" fill="#59b55a"/><path d="M0 15l9 4v5l-9-4z" fill="#f3e07a" stroke="#7a6410" stroke-width=".8"/><path d="M9 19l6-2v4l-6 3z" fill="#c3a21c"/><path d="M3 19l3 1.300" stroke="#7a6410" stroke-width="1.300"/>'
};
const big={start:1,files:1,edge:1,word:1,excel:1,ppt:1,arcbig:1,catbig:1};
const DEFS='<defs><linearGradient id="cy"><stop stop-color="#8f9db3"/><stop offset=".35" stop-color="#f4f7fb"/><stop offset="1" stop-color="#5d7093"/></linearGradient><linearGradient id="wn" x2="1" y2="1"><stop stop-color="#8ee9fb"/><stop offset="1" stop-color="#1aa0f0"/></linearGradient><linearGradient id="fo" y2="1" x2="0"><stop stop-color="#ffdf70"/><stop offset="1" stop-color="#f6b51e"/></linearGradient><linearGradient id="ed" y2="1" x2="0"><stop stop-color="#2ab4e8"/><stop offset="1" stop-color="#0c59a8"/></linearGradient><linearGradient id="ed2"><stop stop-color="#1b9fe0"/><stop offset="1" stop-color="#6fd85e"/></linearGradient></defs>';

function element(name,render){
  customElements.define(name,class extends HTMLElement{
    connectedCallback(){
      if(this.shadowRoot)return;
      this.attachShadow({mode:'open'}).innerHTML=render(this);
    }
  });
}
const ic=(n,s=16,st='')=>`<ui-icon name="${n}" size="${s}" style="${st}"></ui-icon>`;
const fit=(t,w,st='')=>`<fit-label w="${w}" style="${st}">${t}</fit-label>`;

/* Places toolbar cells in a flex row; x values are the centres of the cells, origin is the row's left edge. */
function row(items,origin,size=16){
  let end=origin;
  return items.map(([n,cx,w=16,cls=''])=>{
    const m=cx-w/2-end;end=cx+w/2;
    if(n==='|')return `<i class="sep" style="margin-left:${m+w/2}px;margin-right:${w/2-1}px"></i>`;
    return `<span class="cell ${cls}" style="margin-left:${m}px;width:${w}px">${n[0]==='<'?n:ic(n,size)}</span>`;
  }).join('');
}
const rowCss=`.cell{display:flex;align-items:center;justify-content:center;flex:none;box-sizing:border-box}
.sep{display:block;flex:none;width:1px;height:18px;background:#b2b2b2}
.on{height:22px;background:#dcebf7;border:1px solid #0078d7}.ong{height:22px;background:#dfe8f0;border:1px solid #9aabbb}`;

element('desk-top',()=>`<style>
:host{display:flex;flex-direction:column;width:1600px;height:900px;
background:
linear-gradient(90deg,#3b2d2b 0,#4d3b35 60px,#514035 165px,#2c4048 180px,#1b1b33 192px,#171733 300px,#2b2426 335px,#463734 372px,#4a3c3a 382px,#1c1a30 400px,#332a30 440px,#28202a 462px,#6d5240 490px,#2c2428 540px,#7d5e4a 570px,#8d6e58 640px,#4d3a38 690px,#3a3430 740px,#b0aaa2 765px,#c8c4ba 788px,#2a2630 796px,#4a4a48 830px,#1b1a22 858px,#98a09a 875px,#2b3434 900px,#d8d2c8 918px,#22202c 940px,#3a2c26 975px,#4a3626 1002px,#a8a09c 1008px,#94807a 1060px,#a8745c 1110px,#8a5a50 1150px,#b88870 1190px,#e8d0a0 1205px,#a87060 1230px,#d8b88c 1290px,#e8c8a0 1350px,#a87868 1375px,#7e5c54 1430px,#6e504c 1480px,#2c2a38 1505px,#6a504c 1530px,#7c6458 1560px,#5c3e40 1600px) 0 40px/1600px 8px no-repeat,
linear-gradient(90deg,#3a3534,#403a38 90px,#4a5352 150px,#39403f 300px,#2c2a2c 330px,#5a524c 420px,#4a4644 540px,#8d8074 570px,#7d7064 630px,#332c30 740px,#6e6259 900px,#20202c 1100px,#584a42 1250px,#141428 1330px,#1b1a2c 1400px,#7c6b58 1440px,#6d5e50 1560px,#2c2030) 0 893px/1600px 7px no-repeat,
linear-gradient(#5a403c 40px,#4a302c 130px,#1a1216 160px,#46332e 180px,#563f38 240px,#2a1c20 270px,#4f3b34 330px,#5c443a 420px,#3a2a28 500px,#5a4a40 600px,#4a4a46 700px,#202028 760px,#3c3636 820px,#3a3432) 0 0/9px 900px no-repeat,
linear-gradient(#7a4c48 50px,#5b3b3a 150px,#1b2140 190px,#1c2440 270px,#5a3134 300px,#7a3c40 330px,#3e2830 350px,#b08a70 405px,#8a6050 420px,#6a5048 460px,#221a24 490px,#d8c0a8 500px,#2c2028 530px,#8a6050 570px,#e8a07c 620px,#f0b890 650px,#d0b090 690px,#401828 740px,#30182c 800px,#201c30) 100% 0/9px 900px no-repeat,#212121}
vm-window{margin:7px 8px;flex:1;min-height:0}
</style><status-bar></status-bar><vm-window></vm-window>`);

element('status-bar',()=>{
const p=(a,h)=>`<div class="p" style="margin-left:${a[0]}px;width:${a[1]}px">${row(h,a[2],12)}</div>`;
return `<style>:host{display:flex;height:40px;flex:none;align-items:center;background:#212121;color:#e6f2f0;font:15px "DejaVu Sans Mono","Liberation Mono",monospace}
.p{height:30px;border-radius:15px;background:#343434;display:flex;align-items:center;flex:none;overflow:hidden}${rowCss}</style>
${p([8,152,8],[[ic('pt',16),26],[ic('pt',16),64],[ic('pt',16),102],[ic('pac',10),140]])}
${p([10,625,170],[[fit('Windows 11 x64 - VMware Workstation 17 Player (Non-commercial use…',594),479,594]])}
${p([67,200,862],[['cpu',878.5,14],[fit('23%',27),906,27],[ic('therm',15),939,14],[fit('58',18),962.500,18],[fit('℃',9,'font-size:10px'),976,9],['mem',1000.500,14],[fit('10GB',36),1032,36]])}
${p([10,297,1072],[[ic('bat',10),1088,14],[fit('100%',36),1129,36],[ic('wifi',10),1167,13],[fit('0.0B/s',54),1208,54],[ic('bt',15),1255,15],[fit('on',18),1278,18],[ic('vol',11),1307,14],[fit('153%',36),1339,36]])}
${p([10,213,1379],[[ic('clock',12),1395,14],[fit('Sat May 04 16:58 PM',171),1495,171]])}`});

element('vm-window',()=>`<style>:host{display:flex;flex-direction:column;background:#212121;border-radius:13px;overflow:hidden;color:#fff;font-family:Lato,sans-serif;box-sizing:border-box;border:1px solid #2b2b2b;border-top-color:#242424}
nav{height:28px;display:flex;align-items:center;font-size:15px;padding:0 0 3px 7px;flex:none;box-sizing:border-box}
nav fit-label{margin-right:17px}
guest-screen{height:777px;flex:none}
footer{flex:1;display:flex;align-items:center;padding:0 12px 0 13px;font-size:13.500px;border-top:1px solid #3c3f44}
footer span{flex:1}ui-icon{margin-left:5px}
</style><nav>${fit('File',25)}${fit('Virtual Machine',112)}${fit('Help',33)}</nav><guest-screen></guest-screen>
<footer><span>${fit('To release input, press Ctrl+Alt',192)}</span>${ic('hdd',15)}${ic('nic',16)}${ic('mus',15)}${ic('note',15)}</footer>`);

element('guest-screen',()=>`<style>:host{display:flex;flex-direction:column;background:#f0f0f0;color:#000;font:11.500px "Open Sans",sans-serif}
header{height:23px;background:#f0f3fb;display:flex;align-items:center;flex:none}
.bars{height:103px;flex:none;background:linear-gradient(90deg,#f0f0f0,#fbfbfb)}
.main{flex:none;height:582px;display:flex}
.stat{height:21px;flex:none;display:flex;align-items:center;justify-content:flex-end}
.stat fit-label{padding-top:1px}
.stat i{width:1px;height:18px;background:#fafafa;margin-right:18px}
task-bar{flex:1}${rowCss}
</style><header>${row([[ic('arcmap',17),19,18],[fit('Untitled - ArcMap',95),80.5,95],['wmin',1475,16],['wmax',1520,16],['wx',1566,16]],9)}</header>
<div class="bars"><arc-bars></arc-bars></div>
<div class="main"><toc-panel></toc-panel><map-view></map-view><catalog-panel></catalog-panel></div>
<div class="stat"><i></i><i style="margin-right:5px"></i>${fit('-125.043  38.002 Unknown Units',167,'margin-right:86px')}</div><task-bar></task-bar>`);

element('arc-bars',()=>{
const menus=[['File',21,39],['Edit',55,75],['View',91,116],['Bookmarks',132,191],['Insert',207,236],['Selection',252,300],['Geoprocessing',316,394],['Customize',410,466],['Windows',482,531],['Help',547,572]].map(([t,a,b])=>[fit(t,b-a),(a+b)/2,b-a]);
const cap='<b class="cap"><svg width="8" height="9"><path d="M1 2h6" stroke="#111" stroke-width="1.500"/><path d="M1 4.500h6L4 8z" fill="#111"/></svg></b>';
const bar=(w,items)=>`<div class="tb" style="width:${w}px"><i class="grip"></i>${row(items.map(a=>a[0]==='|'?['|',a[1],2]:a),18)}${cap}</div>`;
return `<style>:host{display:block}.menu{height:25px;display:flex;align-items:center;padding-bottom:1px;box-sizing:border-box}
.tb{height:26px;display:flex;align-items:center;background:linear-gradient(#fdfdfd,#f1f1f1);border-radius:2px}
.grip{margin-left:6px;width:3px;height:16px;flex:none;background:repeating-linear-gradient(#aaa 0 2px,transparent 2px 4px);background-size:2px 100%;background-repeat:no-repeat}
.cap{margin-left:auto;width:11px;height:25px;align-self:flex-end;flex:none;background:linear-gradient(#ededed,#a5a5a5);display:flex;align-items:flex-end;justify-content:center;padding-bottom:3px;box-sizing:border-box}
.combo{display:flex;align-items:center;box-sizing:border-box;height:21px;border:1px solid #ccc;background:#fff;width:100%;justify-content:space-between;padding:2px}
.combo u{display:block;height:15px;background:#f0f0f0;text-decoration:none}
.combo em{font-style:normal;background:#0078d7;color:#52677a;display:block;width:26px;height:14px;line-height:13px}
.combo ui-icon{opacity:.6}
${rowCss}</style>
<div class="menu">${row(menus,9)}</div>
${bar(620,[['new',31],['open',52],['save',74],['print',96],['|',109],['cut',124],['copy',147],['paste',168],['del',190],['|',204],['undo',218],['redo',240],['|',253],['add',268],['dd',284,12],['|',293],['<div class="combo"><u style="width:124px"></u><ui-icon name="chev" size="12"></ui-icon></div>',370,147],['|',446],['editor',461],['|',474],['toc',489],['catw',511],['searchw',533],['toolw',555],['python',577],['|',590],['model',605]])}
${bar(528,[['zin',29],['zout',51],['pan',74,22,'on'],['globe',96.500],['|',109],['fin',124],['fout',146],['|',160],['back',175],['fwd',195],['|',209],['sel',224],['dd',239,12],['clr',257],['|',271],['ptr',285],['|',298],['info',312],['bolt',335],['popup',356],['|',370],['meas',385],['|',398],['binoc',412],['route',435],['xy',457],['|',470],['time',485],['|',498],['viewer',513]])}
${bar(387,[['g1',30],['g2',52],['g3',74],['g4',96],['g5',118],['|',132],['g6',146],['g7',168],['|',182],['g8',197],['g9',218],['<div class="combo"><u style="width:37px"><em><fit-label w="25">100%</fit-label></em></u><ui-icon name="chev" size="12"></ui-icon></div>',259.500,59],['|',291.500],['g10',306,22,'ong'],['g11',328],['swap',350],['dd2',372]])}`});

element('dock-title',()=>`<style>:host{display:flex;height:20px;align-items:center;background:linear-gradient(90deg,#bccbd9,#d5e4f2);padding:0 3px 0 4px;box-sizing:border-box;flex:none}slot{display:block}span{flex:1}ui-icon{margin-left:3px;margin-bottom:2px}</style><span><slot></slot></span>${ic('pin',12)}${ic('x',12)}`);

element('tree-row',(h)=>{const l=+h.getAttribute('l'),e=h.getAttribute('e'),ind=+h.getAttribute('ind'),i=h.getAttribute('i');
return `<style>:host{display:flex;align-items:center;height:var(--rh,17px);padding-left:${l*ind}px;white-space:nowrap}
.e{width:16px;height:16px;margin-right:var(--eg,2px);flex:none;padding-top:var(--ey,0px)}.t{margin-left:var(--tg,4px);margin-bottom:1px}.t.s{background:#ececec;outline:1px solid #ececec}</style>
<span class="e">${e?ic(e,16):''}</span>${ic(i,16)}<span class="t ${h.hasAttribute('s')?'s':''}"><slot></slot></span>`});

element('toc-panel',()=>{
const r=(l,e,i,t,w,x='')=>`<tree-row ind="19" l="${l}" e="${e}" i="${i}">${t?fit(t,w,x):''}</tree-row>`;
return `<style>:host{display:flex;flex-direction:column;width:200px;flex:none;margin-right:4px}
.tools{height:26px;display:flex;align-items:center;background:linear-gradient(#fdfdfd,#f2f2f2);flex:none}
.box{flex:1;box-sizing:border-box;border:1px solid #828790;background:#fff;width:199px;display:flex;flex-direction:column;overflow:hidden;padding:1px 1px 1px 5px;--rh:17.900px;--eg:2px;--tg:5px;--ey:1px}
.sp{flex:1}.hs{height:16px;margin-left:-4px;background:#f0f0f0;display:flex;align-items:center}.hs i{display:block;width:68px;height:2px;background:#8b8b8b;margin-left:18px}
${rowCss}</style>
<dock-title>${fit('Table Of Contents',94)}</dock-title>
<div class="tools">${row([['lsrc',24],['lcyl',46,22,'on'],['lvis',68],['lsel',90],['|',104,2],['opts',117.500]],9)}</div>
<div class="box">${r(0,'minus','layers','Layers',35,'font-weight:700')}${r(1,'minus','folder','C:\\Users\\avisa\\Document',132)}${r(2,'minus','chk','XYEarthquakes',78)}${r(2.760,'','dot','',0)}${r(2,'','table','Earthquakes',64)}${r(1,'minus','cyl','C:\\Users\\avisa\\Document',132)}${r(2,'minus','chk','CACounties',63)}${r(2.900,'','sw','',0)}<div class="sp"></div><div class="hs"><i></i></div></div>`});

element('catalog-panel',()=>{
const D=[[0,'minus','fhome','Home - Gis09\\Data Bab 05',139],[1,'minus','folder','Others',35],[2,'plus','folder','Pittsburgh',54.500],[2,'plus','cyl','AlleghenyCounty.gdb',116],[2,'plus','cyl','UnitedStates.gdb',90],[2,'plus','cyl','World.gdb',56],[2,'plus','dwg','CampusMap.dwg',94],[2,'','shp','AlleghenyCountyTracts.shp',145],[2,'','dbf','Earthquakes.dbf',85,1],[2,'','shpp','XYEarthquakes.shp',99.500],[1,'','mxd','Bab05-01.mxd',76],[1,'','mxd','Bab05-02.mxd',76],[1,'','mxd','Bab05-03.mxd',76],[0,'minus','fconn','Folder Connections',103],[1,'plus','flink','C:\\Users\\avisa\\Documents\\gis',161],[1,'plus','flink','C:\\Users\\avisa\\Documents\\gis\\gis04\\layers',228],[0,'plus','ftool','Toolboxes',54],[0,'plus','fsrv','Database Servers',88],[0,'plus','fdbc','Database Connections',118],[0,'plus','fgis','GIS Servers',57],[0,'plus','fcloud','My Hosted Services',103],[0,'plus','fcloud','Ready-To-Use Services',119]];
return `<style>:host{display:flex;flex-direction:column;flex:1;margin-left:5px}
.tools{height:25px;display:flex;align-items:center;background:linear-gradient(#fff,#f6f6f6);border-bottom:1px solid #ddd;box-sizing:border-box;flex:none;padding-top:1px}
.loc{height:25px;display:flex;align-items:center;padding:0 3px 0 2px;flex:none}
.c{margin-left:auto;width:243px;box-sizing:border-box;height:22px;border:1px solid #8a8a8a;background:#fff;display:flex;align-items:center;padding:0 2px}.c span{flex:1;margin-left:4px}
.box{margin:1px 4px 4px 0;flex:1;background:#fff;border:1px solid #696969;border-width:2px 1px 1px 2px;border-right-color:#e0e0e0;border-bottom-color:#e0e0e0;padding-left:3px;--eg:3px;--tg:5px}
.box tree-row:first-child{margin-top:-1px}
${rowCss}</style><dock-title>${fit('Catalog',41)}</dock-title>
<div class="tools">${row([['cback',1306],['dd',1323.500,12],['cfwd',1342],['cup',1365],['chome',1388],['cgdb',1411.500],['|',1425,2],['cview',1443],['ddg',1461.500,12],['|',1471,2],['cconn',1488],['|',1502,2],['ctree',1519],['|',1533,2],['opts',1549.500]],1291)}</div>
<div class="loc">${fit('Location:',44)}<div class="c">${ic('dbf',16)}<span>${fit('Earthquakes.dbf',81)}</span>${ic('chev',13)}</div></div>
<div class="box">${D.map(([l,e,i,t,w,s])=>`<tree-row ind="19" l="${l}" e="${e}" i="${i}" ${s?'s':''}>${fit(t,w)}</tree-row>`).join('')}</div>`});

const OFF={A:[0,0],B:[300,570],C:[660,1050]};
const pts=s=>{const out=[];let o=OFF.A;for(const t of s.trim().split(/\s+/)){if(OFF[t]){o=OFF[t];continue}const[x,y]=t.split(',').map(Number);out.push([(x+o[0])/3,(y+o[1])/3])}return out};
const rough=(P)=>{
  const out=[P[0]];let seed=7;for(let i=1;i<P.length;i++){const[a,b]=P[i-1],[c,d]=P[i];const L=Math.hypot(c-a,d-b);
  if(L>5&&Math.abs(c-a)>3&&Math.abs(d-b)>3&&L<26){const n=Math.round(L/3);for(let k=1;k<n;k++){seed=(seed*73+41)%101;const j=(seed/101-.5)*2;out.push([a+(c-a)*k/n+j,b+(d-b)*k/n-j])}}out.push([c,d])}return out};
const d=(s,z)=>'M'+(s[0]==='!'?pts(s.slice(1)):rough(pts(s))).map(p=>p.map(v=>v.toFixed(1)).join(' ')).join('L')+(z?'Z':'');
const STATE='A 167,109 598,109 640,112 753,112 755,109 824,109 824,577 842,592 B 600,60 860,247 900,278 C 812,0 845,28 1000,148 1002,165 1010,180 1025,195 1032,215 1040,235 1065,247 1078,260 1068,275 1045,290 1033,296 1030,308 1019,312 1017,370 1008,388 998,398 987,402 991,420 995,438 992,452 1000,460 1022,460 1027,478 1022,492 1010,505 960,511 860,518 770,523 612,538 606,525 597,510 589,500 584,462 580,440 565,420 537,402 510,382 475,358 455,346 440,345 428,353 415,350 408,340 410,325 402,312 385,305 370,300 330,298 310,292 285,285 275,270 250,255 230,250 200,245 165,240 135,234 90,238 82,228 63,218 67,205 65,190 70,175 60,165 60,140 50,120 45,118 30,115 25,90 15,85 0,75 B 355,545 330,530 315,505 300,490 285,475 260,445 230,425 222,390 220,380 240,378 247,350 235,338 220,325 195,325 170,310 158,300 160,290 147,275 148,255 130,235 128,200 125,185 100,180 75,165 52,163 65,145 57,135 50,118 40,100 A 300,645 270,612 243,590 248,575 240,550 228,540 232,500 236,470 225,445 195,420 165,395 145,385 138,362 140,350 155,320 170,290 178,265 175,240 190,220 188,195 180,165 162,145';
const LINES=`188,194 235,194 235,205 252,205 260,190 245,170 250,130 270,122 272,109
252,205 280,208 290,238 350,258 357,268 370,268 362,258 362,238 395,225 428,208 437,218 432,238 440,240 824,239
597,109 597,239
617,239 617,352
290,238 287,270 262,277 270,300 269,421
195,421 269,421 271,424 360,425
440,240 437,250 415,280 408,300 395,315 403,333 370,355 348,372 358,385 360,425 366,453 372,487 395,489 395,517
348,377 375,367 430,368 450,362 500,362 540,355 560,352 657,352 659,382 685,391 705,374 740,380 775,405 800,430 806,462
592,352 592,365 612,372 608,395 560,435 540,440 500,440 503,453 366,453
598,400 602,440 650,485 655,488
503,455 520,465 510,490 530,495 532,517 493,517 490,515 395,517
372,487 345,498 350,520 343,548 375,600
275,613 320,605 380,600 412,628 450,615 445,600 430,545 400,535 392,517
445,589 537,590 540,575 522,550 527,530 530,517
527,530 595,528 615,500 655,487 690,460 720,468 820,466
655,487 665,517
824,508 740,508 718,498 700,512 640,518 622,545 622,572
824,530 745,532 700,550 665,577 622,572 580,590 570,530
537,590 575,615 585,640 580,690
578,618 648,622 665,655 665,695
592,618 592,590 602,578
648,622 660,595 700,580 740,588 770,573 824,570
665,653 720,655 770,645 810,625 842,592
665,700 710,675 740,660 812,655
812,625 812,667 850,675 870,665 880,680
885,625 892,660 875,680 890,710
345,685 380,690 410,705 435,700
412,628 420,660 447,690 455,705 475,712
450,600 470,610 495,665 478,685 478,712
495,665 530,650 560,652 560,680 575,690 565,720
580,690 660,692
680,745 665,700
B 262,140 275,130 285,125 330,123 365,118
B 365,85 365,118 380,150 425,190 460,220 490,275 518,290
B 380,150 380,203 350,205 290,240 280,235 278,140
B 210,212 225,210 280,193
B 365,125 430,105 512,85
B 425,185 512,97 575,105 590,125 640,155 645,190 632,203 665,205 680,230 712,248 860,247
B 460,220 500,200 550,180 620,185 648,200 632,203 600,235 570,260 518,290
B 300,242 300,290 335,300 380,265 460,220
B 335,300 332,328 345,338 380,360 430,400 430,430 410,440 375,430 350,420 318,390 318,370 290,350 270,335
B 380,360 440,315 460,350 480,355 545,345 600,325 625,290 630,270 675,235
B 440,315 500,290 518,290
B 250,300 270,305 300,325 330,328
B 200,245 300,242
B 180,250 185,280 225,285 255,310 270,335
B 158,295 185,280
B 418,430 420,450 450,475 480,490 495,508
B 475,490 530,445 530,412 580,408 600,395 630,385 632,373 680,372 685,362 780,360
B 600,395 607,410 607,430 598,440 597,508
B 712,248 735,280 770,310 780,360 800,400 825,450 838,490 835,508
B 315,508 835,508 845,505 900,507
!B 495,508 495,535 510,535 513,548 525,555 530,567 545,570 555,583 572,588 575,600 590,603 605,618 605,645
B 890,507 892,660
B 425,640 470,632 475,647 510,615 575,630 605,645
C 245,168 280,180 335,182 430,182 432,179 530,178
C 530,27 532,180 527,190 527,235 525,300 505,318 522,323
C 250,168 250,245
C 337,182 375,260 372,280 345,283 327,297
C 460,347 467,330 480,318 505,318 522,325 560,355 550,385 538,402
C 522,323 550,306 690,306 840,303 895,297 1033,296
C 550,385 575,385 595,397 998,397
C 775,397 775,450 770,455 770,523
C 235,0 235,28
C 525,27 610,27 845,28`.split('\n');
const ISLES=['!C 125,306 158,302 167,315 148,325 130,315','!C 172,296 185,300 235,300 235,308 215,310 190,315 178,306','!C 382,388 405,395 420,400 428,415 405,415 395,400','!C 380,460 395,470 418,493 412,497 385,468'];
const BAY='!B 134,192 140,165 134,152 145,143 165,152 185,150 215,150 235,155 262,140 262,150 250,158 225,153 170,155 152,165 150,185 163,205 175,225 200,243 195,250 170,235 155,215 148,195';
const QUAKES='A 507,60 195,108 156,246 102,264 129,276 195,264 117,303 147,303 166,293 171,296 180,294 195,294 195,312 117,342 150,336 165,342 126,363 147,363 165,357 72,375 90,375 132,390 140,384 150,384 174,384 243,372 195,405 534,330 534,342 711,342 726,357 774,372 810,408 570,420 711,468 789,465 690,486 807,489 795,507 696,513 507,498 582,507 309,513 258,528 228,546 336,558 336,560 396,657 399,669 414,669 447,687 447,702 525,654 507,669 525,687 B 225,162 201,168 162,177 237,186 177,195 207,195 249,204 129,195 132,212 192,210 147,225 207,225 129,240 162,240 225,240 225,255 243,262 255,270 240,273 247,279 192,288 207,290 225,288 216,297 285,288 285,303 270,303 255,309 225,312 288,315 285,318 255,333 264,330 270,336 294,351 321,348 318,369 323,369 363,411 471,438 441,474 444,483 315,501 342,510 468,507 480,513 474,522 426,552 402,603 153,378 180,390 702,225 702,234 756,240 801,333 816,366 825,519 C 339,90 330,99 345,117 316,150 318,150 342,150 333,168 36,198 99,183 114,198 99,213 129,213 240,228 210,246 225,249 192,261 177,276 312,291 372,303 396,306 378,261 393,264 390,272 411,243 474,267 456,291 460,297 468,321 504,324 438,336 434,342 477,366 528,249 519,285 552,261 546,264 552,306 591,306 567,354 612,276 645,255 645,276 654,270 657,276 699,153 708,195 735,216 708,225 717,255 717,276 690,306 726,300 735,312 726,318 630,340 630,345 732,411 765,435 816,429 846,447 852,443 879,447 810,462 828,466 828,471 864,462 864,480 864,495 864,504 867,500 891,522 843,534 864,540 582,462 597,510';

element('map-view',()=>`<style>:host{display:grid;grid-template:1fr 16px/1fr 16px;width:1073px;flex:none;box-sizing:border-box;border:1px solid #e2e2e2;border-top:1px solid #777;border-left:1px solid #777}
.cv{background:#fdfefe;border-top:1px solid #999;border-left:1px solid #888;border-right:1px solid #d8d8d8;border-bottom:1px solid #d8d8d8;overflow:hidden}
svg.m{display:block}
.v{border-left:1px solid #fff;padding:16px 0 18px 6px;display:flex}.v i{width:2px;background:#8b8b8b}
.h{grid-column:1/3;display:flex;align-items:center}.h>i.t{width:943px;height:2px;background:#8b8b8b;margin-left:19px}
${rowCss}.sel{background:#cde6f8;height:16px;border-radius:2px}</style>
<div class="cv"><svg class="m" width="1053" height="562" viewBox="215 204 1053 562"><defs><g id="q"><path d="M-1-3h2v1h1v1h1v2h-1v1h-1v1h-2v-1h-1v-1h-1v-2h1v-1h1z" fill="#000"/><path d="M-1-2h2v1h1v2h-1v1h-2v-1h-1v-2h1z" fill="#5c009c"/></g></defs>
<g transform="translate(440 210)"><g fill="#e2bff5" stroke="#6e6e6e" stroke-width="1" shape-rendering="crispEdges"><path d="${d(STATE,1)}"/>${ISLES.map(s=>`<path d="${d(s,1)}"/>`).join('')}<path fill="none" d="${LINES.map(s=>d(s)).join('')}"/><path fill="#fdfefe" d="${d(BAY,1)}"/></g>
<g shape-rendering="crispEdges">${pts(QUAKES).map(([x,y])=>`<use href="#q" x="${Math.round(x)}" y="${Math.round(y)}"/>`).join('')}</g></g>
<g transform="translate(443 447)">${hand('#000')}</g></svg></div>
<div class="v"><i></i></div>
<div class="h">${row([[ic('ldata',11),223.500,16,'sel'],[ic('llay',11),240.500,12],['|',251.500,2],[ic('refresh',11),264.500,12],[ic('pause',11),281.500,12]],214)}<i class="t"></i></div>`);

element('task-bar',()=>`<style>:host{display:flex;align-items:center;color:#fff;background:linear-gradient(90deg,#1b2430 0,#1b2533 160px,#14284c 260px,#121f5c 400px,#0d2058 640px,#0f2468 800px,#0c1d52 980px,#101c62 1190px,#1b2440 1260px,#1c232f 1350px);border-top:1px solid #39404a;box-sizing:border-box;font-size:11.500px;padding-bottom:2px}
${rowCss}.act{height:40px;border-radius:4px;background:#ffffff14;box-shadow:inset 0 0 0 1px #ffffff12;position:relative}
.act::after,.dotb::after{content:"";position:absolute;bottom:1px;width:16px;height:3px;border-radius:2px;background:#4cc2ff}
.dotb{position:relative;height:40px}.dotb::after{width:6px;background:#9aa0a8}
.ck{display:flex;flex-direction:column;align-items:flex-end;line-height:16px}</style>
${row([[ic('start',23),41.5,24],[ic('files',24),86,24],[ic('edge',24),130,24],[ic('word',24),174,24],[ic('excel',24),218,24],[ic('ppt',24),262,24],[ic('arcbig',23),306,40,'act'],[ic('catbig',24),350,26,'dotb'],[ic('up',14),1419,14],[ic('net',17),1451,18],[ic('snd',17),1474.500,18],[`<div class="ck">${fit('4:58 PM',43)}${fit('5/4/2024',49)}</div>`,1523.500,49],[ic('bell',16),1563,16]],9)}`);

customElements.define('ui-icon',class extends HTMLElement{
  connectedCallback(){
    if(this.shadowRoot)return;
    const n=this.getAttribute('name'),s=this.getAttribute('size')||16,v=big[n]?24:16;
    this.attachShadow({mode:'open'}).innerHTML=`<style>:host{display:block;flex:none;width:${s}px;height:${s}px}svg{display:block;overflow:visible}</style><svg width="${s}" height="${s}" viewBox="0 0 ${v} ${v}">${DEFS}${I[n]||''}</svg>`;
  }
});
/* A label whose tracking is adjusted so that the text takes exactly w pixels. */
customElements.define('fit-label',class extends HTMLElement{
  connectedCallback(){
    if(this.shadowRoot)return;
    const r=this.attachShadow({mode:'open'});
    const w=+this.getAttribute('w');
    r.innerHTML=`<style>:host{display:block;flex:none;white-space:pre;width:${w}px}span{display:inline-block}</style><span><slot></slot></span>`;
    const s=r.querySelector('span'),n=[...this.textContent].length;
    const nat=s.getBoundingClientRect().width;
    if(nat)s.style.letterSpacing=((w-nat)/n).toFixed(3)+'px';
  }
});
</script></body></html>
